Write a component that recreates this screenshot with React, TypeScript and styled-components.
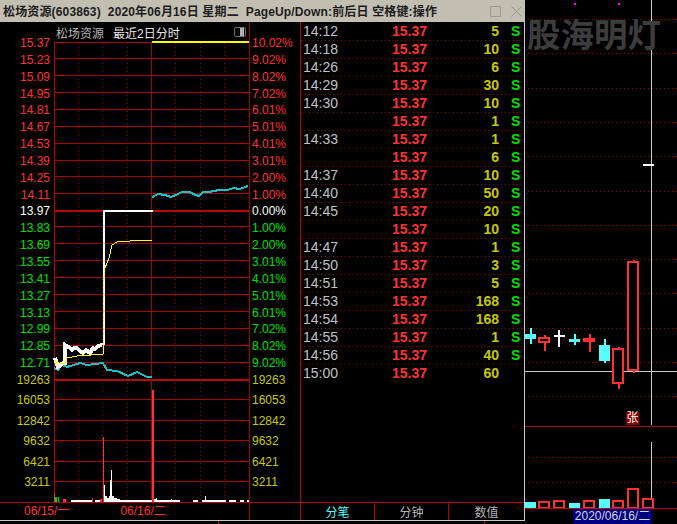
import React from 'react';
import styled, { createGlobalStyle } from 'styled-components';

const RED = '#ff3232';
const GRID = '#a80000';
const CYAN = '#55ffff';
const FONT = '"Liberation Sans", "Noto Sans CJK SC", sans-serif';

type Tone = 'red' | 'white' | 'green' | 'yellow';
const toneColor: Record<Tone, string> = {
  red: RED,
  white: '#ffffff',
  green: '#00e000',
  yellow: '#c8c800',
};

const prices = [
  '15.37', '15.23', '15.09', '14.95', '14.81', '14.67', '14.53', '14.39', '14.25', '14.11',
  '13.97', '13.83', '13.69', '13.55', '13.41', '13.27', '13.13', '12.99', '12.85', '12.71',
];
const percents = [
  '10.02%', '9.02%', '8.02%', '7.02%', '6.01%', '5.01%', '4.01%', '3.01%', '2.00%', '1.00%',
  '0.00%', '1.00%', '2.00%', '3.01%', '4.01%', '5.01%', '6.01%', '7.02%', '8.02%', '9.02%',
];
const volumes = ['16053', '12842', '9632', '6421', '3211'];

const trades: [string, number, boolean][] = [
  ['14:12', 5, true], ['14:18', 10, true], ['14:26', 6, true], ['14:29', 30, true],
  ['14:30', 10, true], ['', 1, true], ['14:33', 1, true], ['', 6, true],
  ['14:37', 10, true], ['14:40', 50, true], ['14:45', 20, true], ['', 10, true],
  ['14:47', 1, true], ['14:50', 3, true], ['14:51', 5, true], ['14:53', 168, true],
  ['14:54', 168, true], ['14:55', 1, true], ['14:56', 40, true], ['15:00', 60, false],
];

const priceLines = [58, 75, 92, 109, 126, 143, 160, 176, 193, 226, 243, 260, 277, 294, 311, 328, 345, 362];
const volumeLines = [399, 420, 440, 461, 481];
const dottedX = [78, 102, 127, 175, 200, 224];

// [x, top] of the small bars in the volume pane
const whiteBars: [number, number][] = [
  [71, 500], [104, 485], [105, 496], [106, 496], [107, 498], [108, 498], [109, 496], [110, 480],
  [111, 470], [112, 496], [113, 496], [114, 498], [115, 498], [116, 498], [117, 499], [118, 499],
  [119, 499], [120, 500], [149, 500], [153, 498], [154, 499], [155, 499], [156, 498], [157, 500],
  [158, 500], [171, 499], [205, 496], [247, 500],
];
const whiteRuns: [number, number][] = [
  [72, 92], [95, 100], [120, 180], [193, 198], [202, 226], [229, 236], [240, 244], [247, 249],
];

function TimeChart() {
  return (
    <ChartSvg width={195} height={460} viewBox="54 42 195 460" shapeRendering="crispEdges">
      {dottedX.map((x) => (
        <line key={x} x1={x + 0.5} x2={x + 0.5} y1={43} y2={502} stroke={GRID} strokeDasharray="1 3" />
      ))}
      {[...priceLines, ...volumeLines].map((y) => (
        <line key={y} x1={54} x2={249} y1={y + 0.5} y2={y + 0.5} stroke={GRID} />
      ))}
      <line x1={54} x2={249} y1={42.5} y2={42.5} stroke={GRID} />
      <rect x={54} y={210} width={195} height={2} fill="#b80808" />
      <rect x={54} y={379} width={195} height={2} fill="#b80808" />
      <line x1={54.5} x2={54.5} y1={42} y2={502} stroke="#c00000" />
      <line x1={151.5} x2={151.5} y1={42} y2={502} stroke={GRID} />

      <rect x={152} y={41} width={97} height={2} fill="#ffff00" />

      <g fill="none">
        <polyline
          stroke="#18c0c8"
          strokeWidth={2}
          points="152,198 154,196 158,194 165,195 171,197 178,194 182,192 190,192 193,194 199,196 203,192 210,192 213,191 220,190 228,190 233,188 240,189 248,186"
        />
        <polyline
          stroke="#18c0c8"
          strokeWidth={2}
          points="54,368 58,370 62,365 67,367 80,363 87,365 103,363 107,370 117,371 128,376 137,372 147,377 152,377"
        />
        <polyline
          stroke="#ffffff"
          strokeWidth={4}
          points="55,358 58,367 63,363 65,363 65,345 70,348 72,350 74,348 77,348 80,351 83,353 86,350 90,353 93,348 95,349 98,346 102,345"
        />
        <polyline
          stroke="#ffffff"
          strokeWidth={2}
          points="102,344 104,344 104,211 153,211"
        />
        <polyline
          stroke="#ffff00"
          strokeWidth={1}
          points="54,360 58,363 65,363 67,358 77,356 90,355 103,354 103,287 105,268 109,258 112,245 117,242 130,241 152,240"
        />
      </g>

      <rect x={54} y={494} width={1} height={8} fill={RED} />
      <rect x={55} y={497} width={2} height={5} fill="#00e000" />
      <rect x={58} y={497} width={1} height={5} fill="#00e000" />
      <rect x={63} y={499} width={3} height={3} fill={RED} />
      <rect x={92} y={498} width={1} height={4} fill={RED} />
      <rect x={100} y={499} width={2} height={3} fill={RED} />
      {whiteRuns.map(([a, b]) => (
        <rect key={a} x={a} y={500} width={b - a} height={2} fill="#ffffff" />
      ))}
      {whiteBars.map(([x, top]) => (
        <rect key={x} x={x} y={top} width={1} height={502 - top} fill="#ffffff" />
      ))}
      <rect x={103} y={437} width={1} height={65} fill={RED} />
      <rect x={152} y={390} width={2} height={112} fill={RED} />
    </ChartSvg>
  );
}

function Candle({ x, y, w, h, top, bottom, color, hollow }: {
  x: number; y: number; w: number; h: number; top: number; bottom: number; color: string; hollow?: boolean;
}) {
  const mid = x + Math.floor(w / 2);
  return (
    <g>
      <rect x={mid - 0.5} y={top} width={2} height={bottom - top} fill={color} />
      {hollow ? (
        <rect x={x + 1} y={y + 1} width={w - 2} height={h - 2} fill="#000" stroke={color} strokeWidth={2} />
      ) : (
        <rect x={x} y={y} width={w} height={h} fill={color} />
      )}
    </g>
  );
}

function VolumeBar({ x, top, hollow }: { x: number; top: number; hollow?: boolean }) {
  return hollow ? (
    <rect x={x + 1} y={top + 1} width={10} height={507 - top} fill="#000" stroke={RED} strokeWidth={2} />
  ) : (
    <rect x={x} y={top} width={11} height={508 - top} fill={CYAN} />
  );
}

function KChart() {
  const dotted: number[] = [];
  for (let k = 0; k < 12; k++) dotted.push(Math.round(19 + 34.3 * k));
  return (
    <KSvg width={152} height={508} viewBox="525 0 152 508" shapeRendering="crispEdges">
      {dotted.map((y) => (
        <line key={y} x1={528} x2={677} y1={y + 0.5} y2={y + 0.5} stroke={GRID} strokeDasharray="1 3" />
      ))}
      <line x1={528} x2={677} y1={457.5} y2={457.5} stroke={GRID} strokeDasharray="1 3" />
      <line x1={528} x2={677} y1={482.5} y2={482.5} stroke={GRID} strokeDasharray="1 3" />
      <rect x={574} y={3} width={2} height={2} fill="#ff00ff" />
      <rect x={618} y={3} width={2} height={2} fill="#ff00ff" />

      <rect x={651} y={0} width={1} height={425} fill="#c8c8c8" />
      <rect x={651} y={442} width={1} height={66} fill="#c8c8c8" />
      <rect x={525} y={371} width={152} height={1} fill="#c8c8c8" />
      <rect x={525} y={426} width={152} height={1} fill="#b80000" />
      <rect x={643} y={164} width={11} height={2} fill="#ffffff" />

      <Candle x={525} y={334} w={11} h={5} top={328} bottom={344} color={CYAN} />
      <Candle x={538} y={337} w={12} h={6} top={335} bottom={351} color={RED} hollow />
      <rect x={558} y={330} width={2} height={17} fill="#ffffff" />
      <rect x={554} y={335} width={11} height={2} fill="#ffffff" />
      <Candle x={569} y={339} w={11} h={3} top={334} bottom={345} color={CYAN} />
      <Candle x={583} y={338} w={12} h={4} top={334} bottom={352} color={RED} />
      <Candle x={599} y={345} w={11} h={16} top={339} bottom={363} color={CYAN} />
      <Candle x={612} y={348} w={12} h={36} top={347} bottom={389} color={RED} hollow />
      <Candle x={627} y={261} w={12} h={110} top={260} bottom={373} color={RED} hollow />

      <VolumeBar x={525} top={502} />
      <VolumeBar x={538} top={501} hollow />
      <VolumeBar x={553} top={500} hollow />
      <VolumeBar x={569} top={503} />
      <VolumeBar x={583} top={500} hollow />
      <VolumeBar x={599} top={499} />
      <VolumeBar x={612} top={500} hollow />
      <VolumeBar x={627} top={488} hollow />
      <VolumeBar x={642} top={498} hollow />
    </KSvg>
  );
}

export default function App() {
  return (
    <>
      <GlobalStyle />
      <Screen>
        <MainColumn>
          <TitleBar>
            <TitleText>松场资源(603863)  2020年06月16日 星期二  PageUp/Down:前后日 空格键:操作</TitleText>
            <WindowButtons>
              <MaxButton />
              <svg width={11} height={11} viewBox="0 0 11 11">
                <path d="M0.5 0.5 L10.5 10.5 M10.5 0.5 L0.5 10.5" stroke="#9c9a90" fill="none" />
              </svg>
            </WindowButtons>
          </TitleBar>
          <Panels>
            <ChartPanel>
              <ChartRow>
                <AxisColumn $side="left">
                  {prices.map((p, i) => (
                    <PriceTick key={p} $tone={i < 10 ? 'red' : i === 10 ? 'white' : 'green'}>{p}</PriceTick>
                  ))}
                  <PriceTick $tone="yellow">19263</PriceTick>
                  <VolumeGroup>
                    {volumes.map((v) => <VolumeTick key={v}>{v}</VolumeTick>)}
                  </VolumeGroup>
                </AxisColumn>
                <ChartColumn>
                  <ChartHeader>
                    <StockName>松场资源</StockName>
                    <RangeName>最近2日分时</RangeName>
                    <ToggleIcon />
                  </ChartHeader>
                  <TimeChart />
                </ChartColumn>
                <AxisColumn $side="right">
                  {percents.map((p, i) => (
                    <PriceTick key={i} $tone={i < 10 ? 'red' : i === 10 ? 'white' : 'green'}>{p}</PriceTick>
                  ))}
                  <PriceTick $tone="yellow">19263</PriceTick>
                  <VolumeGroup>
                    {volumes.map((v) => <VolumeTick key={v}>{v}</VolumeTick>)}
                  </VolumeGroup>
                </AxisColumn>
              </ChartRow>
              <DateRow>
                <DateCells>
                  <DateLabel>06/15/一</DateLabel>
                  <DateLabel>06/16/二</DateLabel>
                </DateCells>
              </DateRow>
            </ChartPanel>
            <TradePanel>
              <TradeList>
                {trades.map(([time, vol, sell], i) => (
                  <TradeRow key={i} $last={i === trades.length - 1}>
                    <TradeTime>{time}</TradeTime>
                    <TradePrice>15.37</TradePrice>
                    <TradeVolume>{vol}</TradeVolume>
                    <TradeSide>{sell ? 'S' : ''}</TradeSide>
                  </TradeRow>
                ))}
              </TradeList>
              <TabBar>
                <Tab $active>分笔</Tab>
                <Tab>分钟</Tab>
                <Tab>数值</Tab>
              </TabBar>
            </TradePanel>
          </Panels>
          <TickStrip>
            <TickCell $width={219} />
            <TickCell $width={266} />
          </TickStrip>
        </MainColumn>
        <KPanel>
          <KChart />
          <Watermark>股海明灯</Watermark>
          <RiseBadge>张</RiseBadge>
          <KFooter>
            <CursorDate>2020/06/16/二</CursorDate>
          </KFooter>
        </KPanel>
      </Screen>
    </>
  );
}

const GlobalStyle = createGlobalStyle`
  html, body {
    margin: 0;
    background: #000;
    overflow: hidden;
  }
  * {
    box-sizing: border-box;
  }
`;

const Screen = styled.div`
  width: 677px;
  height: 524px;
  display: flex;
  background: #000;
  font-family: ${FONT};
  font-size: 12px;
`;

const MainColumn = styled.div`
  width: 525px;
  display: flex;
  flex-direction: column;
`;

const TitleBar = styled.div`
  height: 22px;
  display: flex;
  align-items: center;
  justify-content: space-between;
  padding: 0 3px 0 3px;
  background: #c2bfb2;
`;

const TitleText = styled.div`
  font-size: 12px;
  font-weight: 700;
  letter-spacing: 0.15px;
  color: #1c1c1c;
  white-space: pre;
  margin-bottom: 2px;
`;

const WindowButtons = styled.div`
  display: flex;
  align-items: center;
  gap: 10px;
`;

const MaxButton = styled.div`
  width: 11px;
  height: 11px;
  border: 1px solid #9c9a90;
`;

const Panels = styled.div`
  height: 498px;
  display: flex;
`;

const ChartPanel = styled.div`
  width: 300px;
  display: flex;
  flex-direction: column;
`;

const ChartRow = styled.div`
  height: 480px;
  display: grid;
  grid-template-columns: 54px 195px 51px;
`;

const AxisColumn = styled.div<{ $side: 'left' | 'right' }>`
  padding-top: 13px;
  text-align: ${(p) => (p.$side === 'left' ? 'right' : 'left')};
  padding-right: ${(p) => (p.$side === 'left' ? '4px' : '0')};
  padding-left: ${(p) => (p.$side === 'right' ? '2px' : '0')};
  border-left: ${(p) => (p.$side === 'right' ? `1px solid ${GRID}` : 'none')};
`;

const PriceTick = styled.div<{ $tone: Tone }>`
  height: 16.85px;
  line-height: 17px;
  color: ${(p) => toneColor[p.$tone]};
`;

const VolumeGroup = styled.div`
  padding-top: 1.5px;
`;

const VolumeTick = styled.div`
  height: 20.5px;
  line-height: 20px;
  color: ${toneColor.yellow};
`;

const ChartColumn = styled.div`
  display: flex;
  flex-direction: column;
`;

const ChartHeader = styled.div`
  height: 20px;
  display: flex;
  align-items: center;
  padding: 0 3px 0 2px;
`;

const StockName = styled.span`
  color: #b4b4b4;
  margin-right: 9px;
`;

const RangeName = styled.span`
  color: #e8e8e8;
`;

const ToggleIcon = styled.span`
  margin-left: auto;
  width: 12px;
  height: 10px;
  border: 1px solid #707070;
  border-radius: 2px;
  background: linear-gradient(90deg, #000 0 5px, #b0b0b0 5px 9px, #000 9px);
`;

const ChartSvg = styled.svg`
  display: block;
  overflow: visible;
`;

const DateRow = styled.div`
  height: 18px;
  border-top: 1px solid #b80000;
`;

const DateCells = styled.div`
  width: 250px;
  height: 100%;
  display: flex;
  gap: 51px;
  padding-left: 24px;
  border-right: 1px solid ${GRID};
`;

const DateLabel = styled.span`
  color: ${RED};
  line-height: 17px;
`;

const TradePanel = styled.div`
  width: 225px;
  display: flex;
  flex-direction: column;
  justify-content: space-between;
  border-left: 1px solid #c00000;
  border-right: 1px solid #c8c8c8;
`;

const TradeList = styled.div`
  padding-top: 1px;
`;

const TradeRow = styled.div<{ $last: boolean }>`
  height: 18px;
  display: grid;
  grid-template-columns: 91px 50px 57px 1fr;
  align-items: center;
  font-size: 14px;
  padding-bottom: 3px;
  background: ${(p) =>
    p.$last ? 'none' : `repeating-linear-gradient(90deg, ${GRID} 0 1px, transparent 1px 4px) bottom / 100% 1px no-repeat`};
`;

const TradeTime = styled.span`
  padding-left: 2px;
  color: #c0c0c0;
`;

const TradePrice = styled.span`
  color: ${RED};
  font-weight: 700;
`;

const TradeVolume = styled.span`
  text-align: right;
  color: ${toneColor.yellow};
  font-weight: 700;
`;

const TradeSide = styled.span`
  padding-left: 12px;
  color: #00e000;
  font-weight: 700;
`;

const TabBar = styled.div`
  height: 18px;
  display: grid;
  grid-template-columns: 73px 74px 1fr;
  border-top: 1px solid #b80000;
`;

const Tab = styled.div<{ $active?: boolean }>`
  display: flex;
  align-items: center;
  justify-content: center;
  color: ${(p) => (p.$active ? CYAN : '#b4b4b4')};
  & + & {
    border-left: 1px solid #b80000;
  }
`;

const TickStrip = styled.div`
  height: 4px;
  display: flex;
  border-top: 1px solid #c8c8c8;
`;

const TickCell = styled.div<{ $width: number }>`
  width: ${(p) => p.$width}px;
  border-right: 1px solid #c00000;
`;

const KPanel = styled.div`
  position: relative;
  width: 152px;
  display: flex;
  flex-direction: column;
`;

const KSvg = styled.svg`
  display: block;
`;

const Watermark = styled.div`
  position: absolute;
  left: 2px;
  top: 15px;
  font-size: 33.5px;
  line-height: 42px;
  font-weight: 700;
  color: #3c3c3c;
  white-space: nowrap;
`;

const RiseBadge = styled.div`
  position: absolute;
  left: 101px;
  top: 412px;
  width: 13px;
  height: 13px;
  background: #8c0000;
  color: #fff;
  font-size: 12px;
  line-height: 13px;
  text-align: center;
`;

const KFooter = styled.div`
  height: 16px;
  padding-left: 48px;
  border-top: 1px solid #b80000;
`;

const CursorDate = styled.div`
  width: 79px;
  height: 15px;
  background: #000080;
  color: #d8d8d8;
  font-size: 12px;
  line-height: 15px;
  text-align: center;
  white-space: nowrap;
`;
